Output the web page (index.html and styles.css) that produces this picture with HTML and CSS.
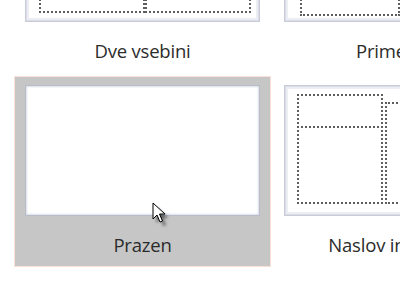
FILE: index.html
```html
<!DOCTYPE html>
<html lang="sl">
<head>
    <meta charset="UTF-8">
    <title>Postavitve</title>
    <link rel="stylesheet" href="styles.css">
</head>
<body>
    <div class="gallery">
        <div class="tile">
            <div class="thumb">
                <span class="ph ph-two-left"></span>
                <span class="ph ph-two-right"></span>
            </div>
            <div class="caption">Dve vsebini</div>
        </div>

        <div class="tile">
            <div class="thumb">
                <span class="ph ph-cmp-left"></span>
                <span class="ph ph-cmp-right"></span>
            </div>
            <div class="caption">Primerjava</div>
        </div>

        <div class="tile selected">
            <div class="thumb"></div>
            <div class="caption">Prazen</div>
        </div>

        <div class="tile">
            <div class="thumb">
                <span class="ph ph-cap-title"></span>
                <span class="ph ph-cap-text"></span>
                <span class="ph ph-cap-content"></span>
            </div>
            <div class="caption">Naslov in vsebina</div>
        </div>
    </div>

    <svg class="cursor" width="20" height="26" viewBox="0 0 20 26">
        <defs>
            <filter id="shadow" x="-50%" y="-50%" width="200%" height="200%">
                <feGaussianBlur stdDeviation="1.6"/>
            </filter>
        </defs>
        <path d="M3 3 L3 19 L7 15 L10 22 L12.5 21 L9.5 14 L15 14 Z" fill="#000" opacity="0.5" filter="url(#shadow)" transform="translate(1.5 2)"/>
        <path d="M1 1 L1 17 L5 13 L8 20 L10.5 19 L7.5 12 L13 12 Z" fill="#fff" stroke="#000" stroke-width="1" stroke-linejoin="miter"/>
    </svg>
</body>
</html>
```

FILE: styles.css
```css
* {
    margin: 0;
    padding: 0;
    box-sizing: border-box;
}

html,
body {
    width: 400px;
    height: 300px;
    overflow: hidden;
    background: #fff;
}

body {
    font-family: 'Open Sans', 'Noto Sans', sans-serif;
    color: #2b2b2b;
    position: relative;
}

.gallery {
    display: grid;
    grid-template-columns: 257px 257px;
    column-gap: 2px;
    row-gap: 3px;
    margin: -118px 0 0 14px;
}

.tile {
    height: 191px;
    padding: 8px 10px 0;
    border: 1px solid transparent;
}

.tile.selected {
    background: #c6c6c6;
    border-color: #fbe0d8;
}

.thumb {
    position: relative;
    width: 235px;
    height: 131px;
    background: #fff;
    border: 1px solid #c9cdd8;
    box-shadow: inset 0 0 0 1px #d9dce6, inset 0 0 0 3px #eceef3;
}

.selected .thumb {
    border-color: #b7bcc8;
    box-shadow: inset 0 0 2px 1px #d9dde6;
}

.caption {
    height: 50px;
    padding-top: 16px;
    font-size: 18.5px;
    letter-spacing: -0.2px;
    line-height: 26px;
    text-align: center;
    white-space: nowrap;
}

/* dotted placeholders inside the slide thumbnails */
.ph {
    position: absolute;
    border: 2px dotted #5e5e5e;
}

.ph-two-left {
    left: 13px;
    top: 40px;
    width: 106px;
    height: 81px;
}

.ph-two-right {
    left: 119px;
    top: 40px;
    width: 106px;
    height: 81px;
}

.ph-cmp-left {
    left: 15px;
    top: 44px;
    width: 100px;
    height: 80px;
}

.ph-cmp-right {
    left: 121px;
    top: 44px;
    width: 100px;
    height: 80px;
}

.ph-cap-title {
    left: 12px;
    top: 8px;
    width: 86px;
    height: 34px;
}

.ph-cap-text {
    left: 12px;
    top: 40px;
    width: 86px;
    height: 78px;
}

.ph-cap-content {
    left: 100px;
    top: 16px;
    width: 124px;
    height: 102px;
}

.cursor {
    position: absolute;
    left: 152px;
    top: 202px;
}
```
